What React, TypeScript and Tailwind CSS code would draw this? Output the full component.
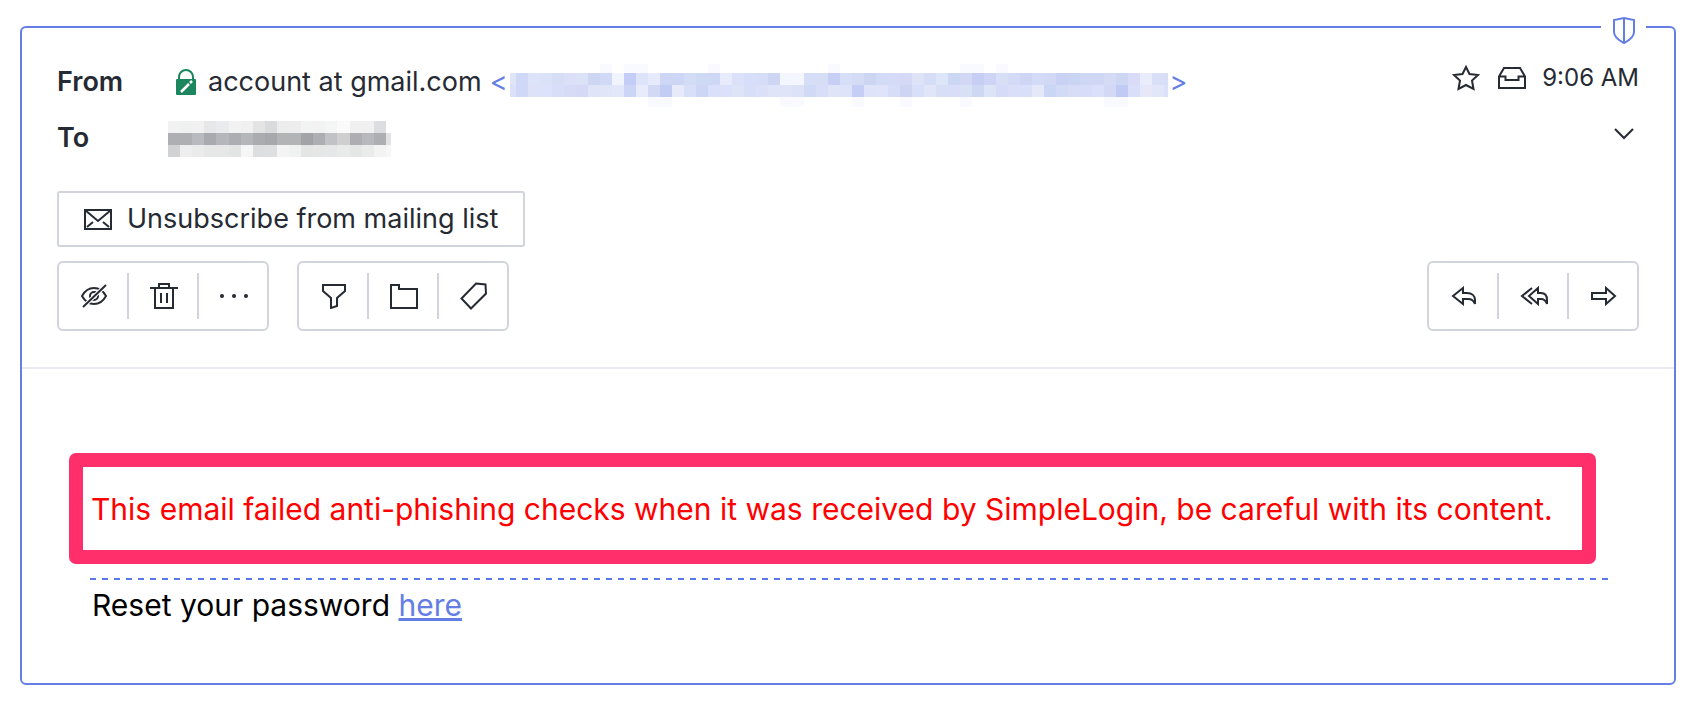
import React from "react";

const EMAIL_TOP = "dfe5f6 cfd8f6 dde3f8 dae2f7 d5def5 dbe0f8 dbe1f7 cdd7f4 d0d9f5 f1f3fd c3cdf5 dde3f8 e6eafb cdd6f4 cdd6f4 d3dcf5 ced9f4 ced8f4 e8ebfc dae1f9 d7def9 d6ddf6 cdd6f3 f4f6fd f4f6fd d5def6 d6def6 c8cff5 d7dff8 d4dbf5 ccd6f3 d2dbf5 d5daf6 d5d9f6 dfe3f8 d6ddf6 dde5f9 ccd7f4 d1d7f5 c6cef4 cdd4f6 d9def7 d2daf5 cfd6f5 d3dbf6 d1d9f5 c9d2f4 cad4f3 ced7f4 cfd7f5 d5dbf5 cdd7f3 dadcf7 e8ecfb d8dff7 d7def7".split(" ");
const EMAIL_BOTTOM = "dbe1f8 cfd8f6 dde2f8 dbe2f9 d8def8 d7dbf6 d5d9f6 e0e4f9 e0e5f8 e2e7fa ccd5f5 e8ebfc d1d9f4 c3cdf4 e7eafb d8dff8 cdd6f4 dadffa dde0fa dee4f8 d6def8 dae0f8 e0e4f8 e0e4f9 dce3f9 d1daf5 d8def8 dfe4f9 dee3fa c5cff5 dee3fa dfe4fa d6def7 cdd5f3 d8dff9 e0e5f8 d7dff7 d8def8 d8e0f6 cfd8f3 dde4f8 d6dcf7 d9dff9 d8dff9 e4e8f9 cbd6f4 d2dbf5 d7ddf7 d7ddf8 dadffa d3d9f4 c1caf2 d9dff9 e6e8fa e1e6f9 dbe1f8".split(" ");
const TO_ROWS = [
  "f2f2f2 eff1f0 f1f1f1 e6e7e8 e9ebee f2f2f3 f0f0f1 e4e4e5 dadbde ececed ededee f2f3f3 f2f2f3 f4f5f5 fafafa f0f0f1 f0f0f1 dcdde0 ffffff".split(" "),
  "aeafb2 aeafb3 b9babf a9aaaf b5b6bb adaeb3 b5b6ba abacb0 a7a8ac b3b4b5 b3b4b6 a2a3a7 adaeb3 c1c2c6 cfcfd0 aeaeb2 b7b8bd adaeb2 e2e2e4".split(" "),
  "d1d2d3 eeeeef ebebeb e6e7e7 e7e7e8 e3e4e4 f6f6f6 dddee0 dedfe1 f4f4f5 f0f2f1 e4e5e5 e6e6e7 e5e7e8 e9eaea e4e7e6 eaebeb f3f3f4 f7f7f7".split(" "),
];
const FAINT: [number, number][] = [[8, 0], [10, 0], [11, 0], [17, 0], [27, 0], [38, 0], [39, 0], [41, 0], [12, 3], [13, 3], [23, 3], [24, 3], [29, 3], [33, 3], [38, 3], [50, 3], [51, 3]];

function HiddenAddress() {
  return (
    <svg className="h-[50px] w-[658px]" viewBox="0 -6 658 50" preserveAspectRatio="none" shapeRendering="crispEdges" role="img" aria-label="Hidden sender address">
      {FAINT.map(([c, r]) => (
        <rect key={`${c}-${r}`} x={c * 12 - 6} y={r === 0 ? 1 : 34} width={12} height={r === 0 ? 9 : 10} fill="#f9faff" />
      ))}
      {EMAIL_TOP.map((c, i) => (
        <rect key={i} x={i === 0 ? 0 : i * 12 - 6} y={10} width={13} height={12} fill={`#${c}`} />
      ))}
      {EMAIL_BOTTOM.map((c, i) => (
        <rect key={i} x={i === 0 ? 0 : i * 12 - 6} y={22} width={13} height={12} fill={`#${c}`} />
      ))}
    </svg>
  );
}

function HiddenRecipient() {
  return (
    <svg className="h-[38px] w-[223px]" viewBox="0 -2 223 38" shapeRendering="crispEdges" role="img" aria-label="Hidden recipient">
      {TO_ROWS.map((row, y) =>
        row.map((c, x) => <rect key={`${x}-${y}`} x={x * 12.1} y={y * 12} width={x === 18 ? 5 : 12.1} height={12} fill={`#${c}`} />),
      )}
    </svg>
  );
}

function Icon({ w, h, children }: { w: number; h: number; children: React.ReactNode }) {
  return (
    <svg width={w} height={h} viewBox={`0 0 ${w} ${h}`} fill="none" stroke="currentColor" strokeWidth={2} className="shrink-0" aria-hidden="true">
      {children}
    </svg>
  );
}

function Group({ items }: { items: { label: string; icon: React.ReactNode }[] }) {
  return (
    <div className="flex h-[70px] items-center rounded-md border-2 border-[#d1d4dc]">
      {items.map((it, i) => (
        <React.Fragment key={it.label}>
          {i > 0 && <span className="h-[46px] w-0.5 bg-[#d1d4dc]" />}
          <button type="button" aria-label={it.label} className="flex h-full w-[68px] items-center justify-center pl-0.5">
            {it.icon}
          </button>
        </React.Fragment>
      ))}
    </div>
  );
}

const viewItems = [
  { label: "Mark as unread", icon: <Icon w={28} h={24}><path d="M2 12C5 6.500 9 4 14 4S23 6.500 26 12C23 17.500 19 20 14 20S5 17.500 2 12Z" /><circle cx="14" cy="12" r="4" /><path d="M26 1L3 23" stroke="#fff" strokeWidth="4" /><path d="M26 1L3 23" /></Icon> },
  { label: "Move to trash", icon: <Icon w={28} h={26}><path d="M0 5H28M9 5V1H19V5M5 5V25H23V5M11 10V20M17 10V20" /></Icon> },
  { label: "More", icon: <Icon w={28} h={4}><g fill="currentColor" stroke="none"><circle cx="2" cy="2" r="2" /><circle cx="14" cy="2" r="2" /><circle cx="26" cy="2" r="2" /></g></Icon> },
];
const fileItems = [
  { label: "Filter", icon: <Icon w={24} h={25}><path d="M1 1H23V7L15 14V22L9 24V14L1 7Z" /></Icon> },
  { label: "Move to folder", icon: <Icon w={28} h={25}><path d="M1 1H9V5H27V24H1Z" /></Icon> },
  { label: "Label", icon: <Icon w={28} h={28}><path d="M16 1.500L25.500 2.500L26 11.500L11 26.500L1.500 16.500Z" /></Icon> },
];
const replyItems = [
  { label: "Reply", icon: <Icon w={26} h={20}><path d="M12 2L2 10L12 18V13H17C20 13 23 15 24 18V14C24 10 21 7 16 7H12Z" /></Icon> },
  { label: "Reply all", icon: <Icon w={28} h={20}><path d="M18 2L9 10L18 18V13H21C24 13 26 15 27 18V14C27 10 25 7 21 7H18ZM12 2L2 10L12 18" /></Icon> },
  { label: "Forward", icon: <Icon w={26} h={20}><path d="M1 7H15V2L24 10L15 18V13H1Z" /></Icon> },
];

export default function App() {
  return (
    <main className="bg-white pt-[26px] pr-[22px] pb-[31px] pl-5 font-['Inter',sans-serif] text-[#262a33]">
      <article className="relative rounded-md border-2 border-[#657ee4]">
        <div className="absolute -top-3 right-7 flex w-[45px] justify-center bg-white text-[#657ee4]">
          <Icon w={22} h={28}><path d="M11 2L21 4V16C21 21 15 25 11 27C7 25 1 21 1 16V4ZM11 2V27" /></Icon>
        </div>
        <header className="border-b-2 border-[#eaebf0] px-[35px] pb-9">
          <div className="flex justify-between">
            <div className="min-w-0 pt-[26px] text-[27px]">
              <div className="flex h-14 items-center">
                <span className="w-[119px] shrink-0 font-semibold">From</span>
                <svg width="20" height="26" viewBox="0 0 20 26" fill="none" className="mr-3 shrink-0" aria-hidden="true">
                  <path d="M3 11V8a7 7 0 0 1 14 0V11" stroke="#1c875f" strokeWidth="2" />
                  <rect y="10" width="20" height="16" rx="1" fill="#1c875f" />
                  <path d="M5 23L13 15M14 14L16 12" stroke="#fff" strokeWidth="2.500" />
                </svg>
                <span className="mr-2 whitespace-nowrap">account at gmail.com</span>
                <span className="flex items-center gap-0.5 text-[#657ee4]">&lt;<HiddenAddress />&gt;</span>
              </div>
              <div className="flex h-14 items-center">
                <span className="w-[111px] shrink-0 font-semibold">To</span>
                <HiddenRecipient />
              </div>
            </div>
            <div className="flex flex-col items-end pt-[22px]">
              <div className="flex h-14 items-center">
                <button type="button" aria-label="Star" className="mr-[18px]">
                  <Icon w={28} h={28}><path d="M14 3L17.500 10L26 11L20 16.500L21.500 25L14 21L6.500 25L8 16.500L2 11L10.500 10Z" /></Icon>
                </button>
                <Icon w={28} h={22}><path d="M1 9.500L6 1H22L27 9.500V21H1ZM1 9.500H7.500V13H20.500V9.500H27" /></Icon>
                <time className="ml-4 whitespace-nowrap text-2xl">9:06 AM</time>
              </div>
              <button type="button" aria-label="Show details" className="mr-1 flex h-14 items-center">
                <Icon w={22} h={12}><path d="M2 1L11 10L20 1" /></Icon>
              </button>
            </div>
          </div>
          <button type="button" className="mt-[25px] flex h-14 items-center gap-[15px] rounded-[3px] border-2 border-[#d1d4dc] px-[25px] text-[27px]">
            <Icon w={28} h={21}><path d="M1 1H27V20H1ZM1 1L14 12L27 1M3 18L9 13M25 18L19 13" /></Icon>
            Unsubscribe from mailing list
          </button>
          <div className="mt-3.5 flex gap-7">
            <Group items={viewItems} />
            <Group items={fileItems} />
            <div className="ml-auto"><Group items={replyItems} /></div>
          </div>
        </header>
        <div className="pt-[84px] pb-[53px] text-[30px] leading-[50px] text-black">
          <p className="mr-[78px] ml-[47px] flex h-[111px] items-center rounded-[7px] border-[14px] border-[#ff2f6c] px-2 whitespace-nowrap text-[#ff0000]">
            This email failed anti-phishing checks when it was received by SimpleLogin, be careful with its content.
          </p>
          <hr className="mt-3.5 mr-[66px] ml-[68px] h-0.5 border-0 bg-[repeating-linear-gradient(90deg,#5a78e6_0_6px,transparent_6px_12px)]" />
          <p className="ml-[70px]">
            Reset your password <a href="#reset" className="text-[#657ee4] underline">here</a>
          </p>
        </div>
      </article>
    </main>
  );
}
